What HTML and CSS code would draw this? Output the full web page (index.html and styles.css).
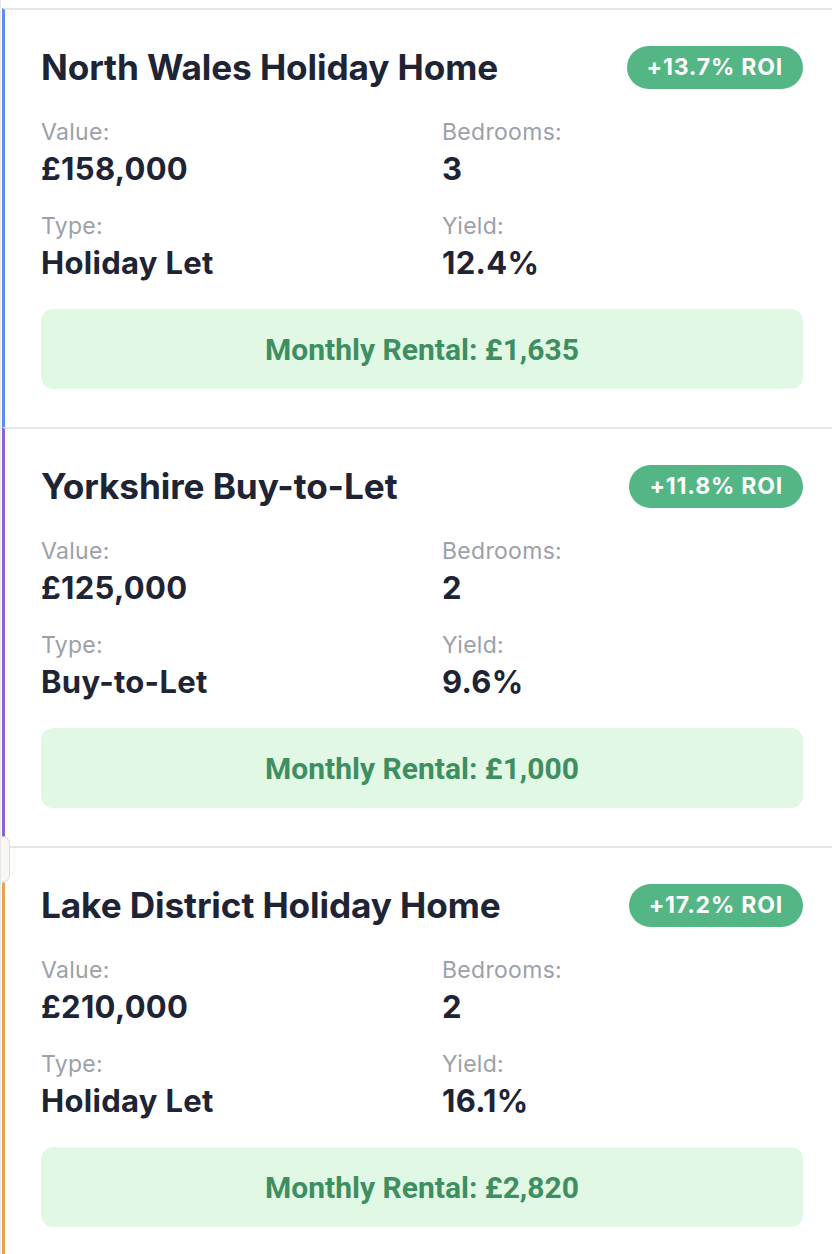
FILE: index.html
```html
<!DOCTYPE html>
<html lang="en">
<head>
<meta charset="utf-8">
<title>Properties</title>
<link rel="stylesheet" href="styles.css">
</head>
<body>
<div class="list">
  <div class="card card-blue">
    <div class="card-head">
      <h2 class="title">North Wales Holiday Home</h2>
      <span class="badge">+13.7% ROI</span>
    </div>
    <div class="stats">
      <div class="stat"><div class="label">Value:</div><div class="value">£158,000</div></div>
      <div class="stat"><div class="label">Bedrooms:</div><div class="value">3</div></div>
      <div class="stat"><div class="label">Type:</div><div class="value">Holiday Let</div></div>
      <div class="stat"><div class="label">Yield:</div><div class="value">12.4%</div></div>
    </div>
    <div class="rental">Monthly Rental: £1,635</div>
  </div>
  <div class="card card-purple">
    <div class="card-head">
      <h2 class="title">Yorkshire Buy-to-Let</h2>
      <span class="badge">+11.8% ROI</span>
    </div>
    <div class="stats">
      <div class="stat"><div class="label">Value:</div><div class="value">£125,000</div></div>
      <div class="stat"><div class="label">Bedrooms:</div><div class="value">2</div></div>
      <div class="stat"><div class="label">Type:</div><div class="value">Buy-to-Let</div></div>
      <div class="stat"><div class="label">Yield:</div><div class="value">9.6%</div></div>
    </div>
    <div class="rental">Monthly Rental: £1,000</div>
  </div>
  <div class="card card-orange">
    <div class="card-head">
      <h2 class="title">Lake District Holiday Home</h2>
      <span class="badge">+17.2% ROI</span>
    </div>
    <div class="stats">
      <div class="stat"><div class="label">Value:</div><div class="value">£210,000</div></div>
      <div class="stat"><div class="label">Bedrooms:</div><div class="value">2</div></div>
      <div class="stat"><div class="label">Type:</div><div class="value">Holiday Let</div></div>
      <div class="stat"><div class="label">Yield:</div><div class="value">16.1%</div></div>
    </div>
    <div class="rental">Monthly Rental: £2,820</div>
  </div>
  <div class="handle"></div>
</div>
</body>
</html>
```

FILE: styles.css
```css
html, body {
  margin: 0;
  padding: 0;
  background: #ffffff;
}
body {
  font-family: Inter, "Noto Sans", sans-serif;
  color: #1e2433;
}
.list {
  position: relative;
  padding-top: 8px;
  border-left: 1px solid #e8e8e8;
}
.card {
  border-top: 2px solid #e6e6e6;
  border-left: 3px solid #5b8dee;
  margin-left: 1px;
  padding: 36px 29px 38px 36px;
}
.card-blue { border-left-color: #5b8dee; }
.card-purple { border-left-color: #8a63d2; }
.card-orange { border-left-color: #e3a44c; }
.card-head {
  display: flex;
  align-items: center;
  justify-content: space-between;
  height: 43px;
}
.title {
  margin: 0;
  font-size: 35.2px;
  line-height: 43px;
  font-weight: 700;
  letter-spacing: -0.1px;
  color: #1e2433;
  white-space: nowrap;
}
.badge {
  display: inline-block;
  background: #55b685;
  color: #ffffff;
  font-size: 23px;
  font-weight: 700;
  line-height: 43px;
  letter-spacing: 0.8px;
  padding: 0 20px;
  border-radius: 22px;
  white-space: nowrap;
}
.stats {
  display: grid;
  grid-template-columns: 1fr 1fr;
  column-gap: 40px;
  row-gap: 25px;
  margin-top: 29px;
}
.label {
  font-size: 23px;
  line-height: 28px;
  letter-spacing: 0.3px;
  color: #9ca0a8;
}
.value {
  font-size: 31px;
  line-height: 36px;
  font-weight: 700;
  letter-spacing: 0.3px;
  color: #1e2433;
  margin-top: 5px;
}
.rental {
  margin-top: 28px;
  background: #e1f8e5;
  border-radius: 12px;
  height: 80px;
  display: flex;
  align-items: center;
  justify-content: center;
  font-family: Roboto, Inter, sans-serif;
  font-size: 30px;
  font-weight: 700;
  color: #3d8f62;
}
.handle {
  position: absolute;
  left: 0;
  top: 836px;
  width: 8px;
  height: 45px;
  background: #faf8f4;
  border: 1px solid #dcdcdc;
  border-left: none;
  border-radius: 0 8px 8px 0;
}
```
